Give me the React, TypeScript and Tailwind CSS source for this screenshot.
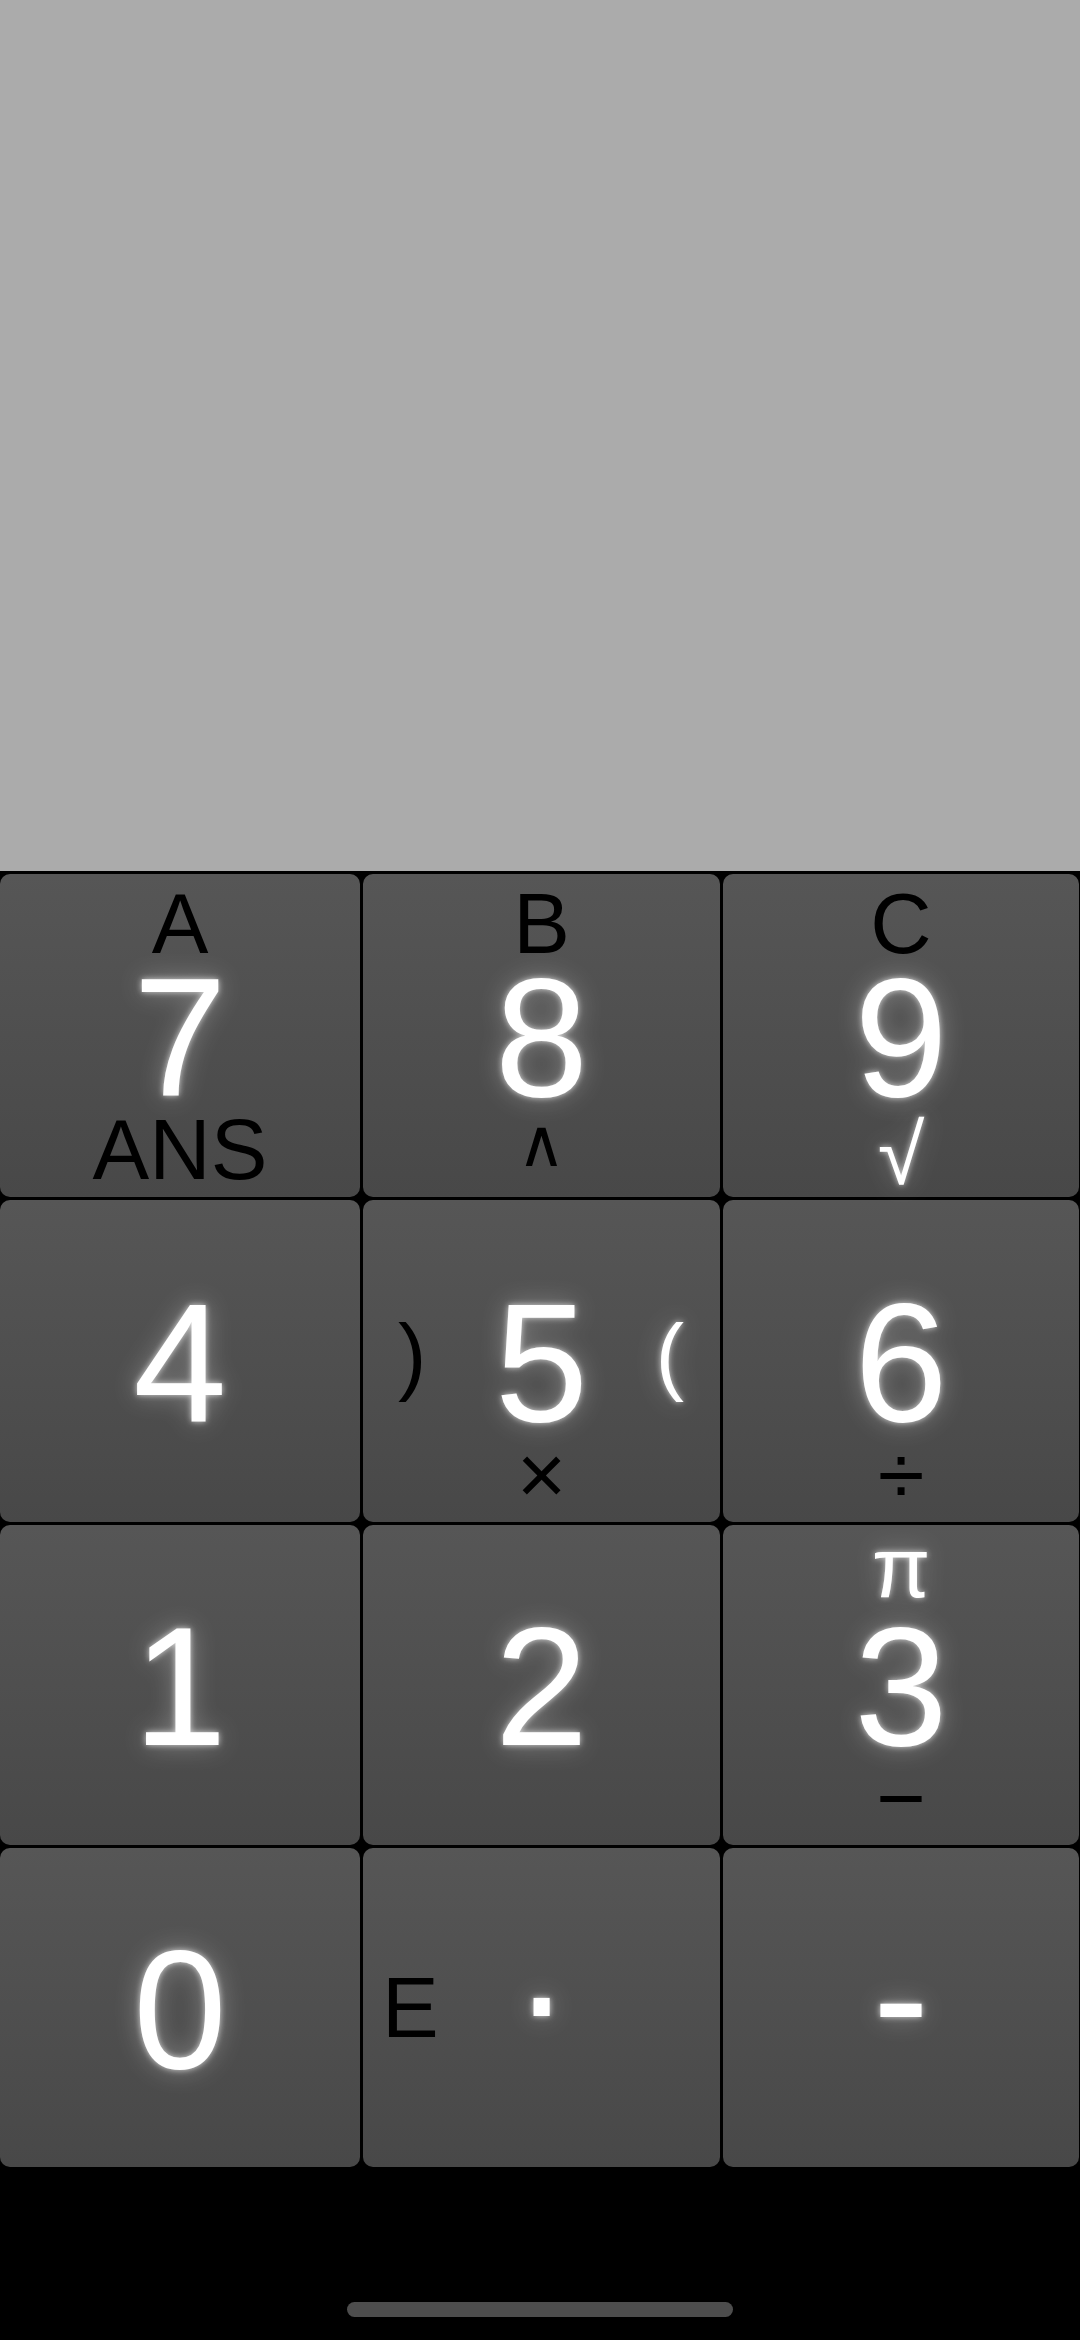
import React from 'react';

type Label = { t: string; white?: boolean; cls?: string };

type KeyDef = {
  main: string;
  mainCls?: string;
  top?: Label;
  bottom?: Label;
  left?: Label;
  right?: Label;
};

const glow =
  'text-white [text-shadow:0_0_6px_rgba(255,255,255,0.75),0_0_26px_rgba(255,255,255,0.35)]';

const keys: KeyDef[] = [
  { main: '7', top: { t: 'A' }, bottom: { t: 'ANS' } },
  {
    main: '8',
    top: { t: 'B' },
    bottom: { t: '∧', cls: "font-['DejaVu_Sans',sans-serif] text-[66px]! -translate-y-[15px]" },
  },
  { main: '9', top: { t: 'C' }, bottom: { t: '√', white: true, cls: 'translate-y-[5px]' } },
  { main: '4' },
  {
    main: '5',
    left: { t: ')', cls: '-translate-y-[7px] pl-[35px]' },
    right: { t: '(', white: true, cls: '-translate-y-[7px] pr-[36px]' },
    bottom: { t: '×' },
  },
  { main: '6', bottom: { t: '÷' } },
  { main: '1' },
  { main: '2' },
  { main: '3', top: { t: 'π', white: true, cls: '-translate-y-[7px]' }, bottom: { t: '−' } },
  { main: '0' },
  { main: '.', mainCls: '-translate-y-[50px]', left: { t: 'E', cls: 'pl-[19px]' } },
  { main: '-', mainCls: '-translate-y-[11px]' },
];

function Small({ label }: { label?: Label }) {
  if (!label) return null;
  return (
    <span
      className={`block text-[85px] leading-none ${label.white ? glow : 'text-black'} ${label.cls ?? ''}`}
    >
      {label.t}
    </span>
  );
}

function Key({ k }: { k: KeyDef }) {
  return (
    <div className="grid grid-cols-[minmax(0,1fr)_auto_minmax(0,1fr)] grid-rows-[minmax(0,1fr)_auto_minmax(0,1fr)] rounded-[10px] bg-linear-to-b from-[#565656] to-[#484848]">
      {/* top label */}
      <div className="col-span-3 flex items-start justify-center pt-[7px]">
        <Small label={k.top} />
      </div>

      {/* middle row */}
      <div className="flex items-center justify-start">
        <Small label={k.left} />
      </div>
      <span className={`block text-[168px] leading-none ${glow} ${k.mainCls ?? 'translate-y-[2px]'}`}>
        {k.main}
      </span>
      <div className="flex items-center justify-end">
        <Small label={k.right} />
      </div>

      {/* bottom label */}
      <div className="col-span-3 flex items-end justify-center pb-[5px]">
        <Small label={k.bottom} />
      </div>
    </div>
  );
}

export default function App() {
  return (
    <div className="flex h-[2340px] w-[1080px] flex-col bg-black font-['Liberation_Sans',Arial,sans-serif]">
      {/* display area */}
      <div className="h-[871px] bg-[#ababab]" />

      {/* keypad */}
      <div className="grid grid-cols-[360px_357px_356px] grid-rows-[323px_322px_320px_319px] gap-[3px] pt-[3px]">
        {keys.map((k, i) => (
          <Key key={i} k={k} />
        ))}
      </div>

      {/* home indicator */}
      <div className="flex flex-1 items-end justify-center pb-[23px]">
        <div className="h-[15px] w-[386px] rounded-full bg-[#4d4d4d]" />
      </div>
    </div>
  );
}
